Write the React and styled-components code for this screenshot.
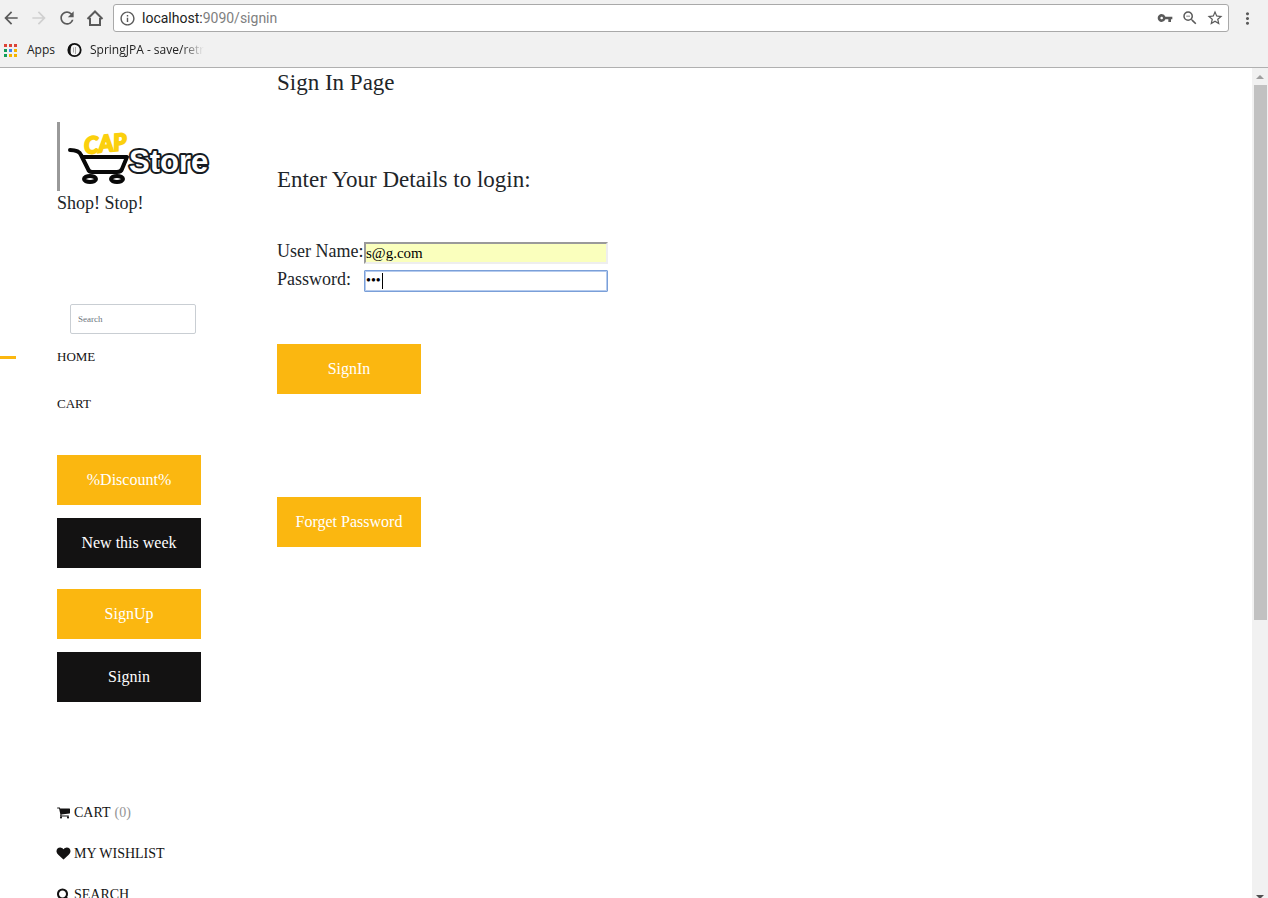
import React from "react";
import styled, { createGlobalStyle } from "styled-components";
import {
  MdArrowBack, MdArrowForward, MdRefresh, MdInfoOutline, MdVpnKey,
  MdZoomOut, MdStarBorder, MdMoreVert,
} from "react-icons/md";

const Global = createGlobalStyle`
  *, *::before, *::after { box-sizing: border-box; }
  body {
    margin: 0;
    background: #fff;
    color: #212529;
    font-family: "Liberation Serif", "Times New Roman", serif;
  }
`;

const Browser = styled.div`
  display: flex;
  flex-direction: column;
  height: 100vh;
  overflow: hidden;
`;

const Chrome = styled.header`
  flex: none;
  height: 68px;
  background: #f1f1f1;
  border-bottom: 1px solid #b0b0b0;
`;

const NavBar = styled.div`
  display: flex;
  align-items: center;
  gap: 8px;
  height: 36px;
  padding: 0 11px 0 1px;
`;

const IconButton = styled.button`
  display: flex;
  align-items: center;
  justify-content: center;
  flex: none;
  width: 20px;
  height: 20px;
  padding: 0;
  border: 0;
  background: none;
  color: ${(p) => (p.disabled ? "#d0d0d0" : "#5a5a5a")};
`;

const AddressBar = styled.div`
  display: flex;
  align-items: center;
  flex: 1;
  gap: 5px;
  height: 28px;
  padding: 0 3px;
  border: 1px solid #a9a9a9;
  border-radius: 3px;
  background: #fff;
`;

const Address = styled.div`
  flex: 1;
  color: #808080;
  font: 14px/20px Roboto, sans-serif;
  b { font-weight: 400; color: #222; }
`;

const Bookmarks = styled.nav`
  display: flex;
  align-items: center;
  height: 28px;
  padding: 0 4px;
  gap: 12px;
`;

const Bookmark = styled.a`
  display: flex;
  align-items: center;
  gap: ${(p) => p.$gap}px;
  color: #222;
  font: 12px/16px "Open Sans", sans-serif;
  text-decoration: none;
  white-space: nowrap;
`;

const FadedLabel = styled.span`
  mask-image: linear-gradient(to right, #000 80%, transparent);
`;

const Viewport = styled.div`
  display: flex;
  flex: 1;
  min-height: 0;
`;

const Page = styled.div`
  display: flex;
  flex: 1;
  min-width: 0;
  overflow: hidden;
`;

const Sidebar = styled.aside`
  flex: none;
  width: 277px;
  padding: 54px 56px 0 57px;
`;

const LogoFigure = styled.a`
  display: block;
  height: 69px;
  border-left: 3px solid #999;
`;

const Tagline = styled.p`
  margin: 0;
  font-size: 18px;
  line-height: 24px;
`;

const SearchForm = styled.form`
  margin: 89px 0 0 13px;
`;

const SearchInput = styled.input`
  display: block;
  width: 126px;
  height: 30px;
  padding: 0 7px;
  border: 1px solid #c9ced3;
  border-radius: 2px;
  font: 9px/14px "Liberation Serif", serif;
  &::placeholder { color: #6c757d; opacity: 1; }
`;

const Menu = styled.nav`
  display: flex;
  flex-direction: column;
  gap: 27px;
  margin-top: 13px;
`;

const MenuLink = styled.a`
  display: flex;
  align-items: center;
  position: relative;
  color: #131212;
  font-size: 13px;
  line-height: 20px;
  text-decoration: none;
  &::before {
    content: "";
    display: ${(p) => (p.$active ? "block" : "none")};
    position: absolute;
    left: -57px;
    width: 16px;
    height: 3px;
    background: #fbb710;
  }
`;

const ButtonStack = styled.div`
  display: flex;
  flex-direction: column;
  align-items: flex-start;
  gap: 13px;
  margin-top: ${(p) => p.$top}px;
`;

const Button = styled.button`
  display: block;
  width: 144px;
  height: 50px;
  padding: 0;
  border: 0;
  background: ${(p) => (p.$dark ? "#131212" : "#fbb710")};
  color: #fff;
  font: 16px/24px "Liberation Serif", serif;
`;

const QuickLinks = styled.nav`
  display: flex;
  flex-direction: column;
  gap: 21px;
  margin-top: 101px;
`;

const QuickLink = styled.a`
  display: flex;
  align-items: center;
  gap: 4px;
  color: #131212;
  font-size: 14px;
  line-height: 20px;
  text-decoration: none;
  white-space: nowrap;
  span { color: #959595; }
`;

const Main = styled.main`
  flex: 1;
  min-width: 0;
`;

const Title = styled.h1`
  margin: 0;
  font-size: 23px;
  line-height: 30px;
  font-weight: 400;
`;

const LoginForm = styled.form`
  margin-top: 67px;
`;

const Fields = styled.div`
  margin-top: 42px;
`;

const Field = styled.div`
  display: flex;
  align-items: center;
  height: 28px;
`;

const Label = styled.label`
  flex: none;
  width: 87px;
  font-size: 18px;
  line-height: 28px;
  white-space: nowrap;
`;

const TextInput = styled.input`
  width: 244px;
  height: 22px;
  margin-top: 4px;
  padding: 0;
  border: 2px inset #eee;
  background: #faffbd;
  color: #000;
  font: 15px/18px "Liberation Serif", serif;
`;

const PasswordBox = styled.div`
  display: flex;
  align-items: center;
  width: 244px;
  height: 22px;
  margin-top: 4px;
  border: 1px solid #7a9fd8;
  border-radius: 1px;
  outline: 1px solid #b5cbee;
  outline-offset: -2px;
`;

const PasswordInput = styled.input`
  width: 17px;
  height: 18px;
  padding: 0 0 0 1px;
  border: 0;
  outline: 0;
  background: none;
  color: #000;
  font: 14px/18px "Liberation Serif", serif;
`;

const Caret = styled.span`
  width: 1px;
  height: 16px;
  background: #000;
`;

const FormActions = styled.div`
  display: flex;
  flex-direction: column;
  align-items: flex-start;
  gap: 103px;
  margin-top: 51px;
`;

const ScrollTrack = styled.div`
  display: flex;
  flex-direction: column;
  align-items: center;
  flex: none;
  width: 16px;
  background: #f1f1f1;
`;

const ScrollArrow = styled.svg`
  flex: none;
  width: 16px;
  height: 17px;
`;

const ScrollThumb = styled.div`
  width: 13px;
  height: 64.5%;
  margin-bottom: auto;
  background: #c1c1c1;
`;

function HomeIcon() {
  return (
    <svg width="18" height="18" viewBox="0 0 18 18" fill="none" stroke="#5a5a5a" strokeWidth="2">
      <path d="M1.500 10 9 2.500l7.500 7.500M4 9v7h10V9" />
    </svg>
  );
}

function AppsIcon() {
  const colors = ["#dc4437", "#dc4437", "#dc4437", "#109d58", "#4285f4", "#f4b400", "#109d58", "#f4b400", "#f4b400"];
  return (
    <svg width="13" height="13" viewBox="0 0 13 13">
      {colors.map((c, i) => (
        <rect key={i} x={(i % 3) * 5} y={Math.floor(i / 3) * 5} width="3" height="3" fill={c} />
      ))}
    </svg>
  );
}

function SpringIcon() {
  return (
    <svg width="15" height="16" viewBox="0 0 15 16">
      <circle cx="7.5" cy="8" r="6.2" fill="#f6f6f6" stroke="#111" strokeWidth="1.8" />
      <path d="M6 1.500C0 3 -1 11 5 14C3 11 3 5 6 1.500z" fill="#111" />
      <path d="M6.500 5.500v5M8.500 5v7" stroke="#aaa" strokeWidth="1" />
    </svg>
  );
}

function Logo() {
  return (
    <svg width="152" height="69" viewBox="0 0 152 69" role="img" aria-label="CAP Store">
      <text x="25" y="32" transform="rotate(-6 25 32)" fill="#fbd00d" stroke="#fbd00d" strokeWidth="2"
        fontFamily="Lato, sans-serif" fontWeight="700" fontStyle="italic" fontSize="23">CAP</text>
      <g fill="none" stroke="#080808" strokeLinejoin="round" strokeLinecap="round">
        <path d="M10 28q9 0 11 5l7 14q1 3 4 3h25q4 0 5-3l5-12H22" strokeWidth="4" />
        <ellipse cx="30" cy="57" rx="6" ry="3" strokeWidth="4" />
        <ellipse cx="57" cy="57" rx="6" ry="3" strokeWidth="4" />
      </g>
      <text x="69" y="50" fill="#fff" stroke="#161b22" strokeWidth="4" paintOrder="stroke" strokeLinejoin="round"
        fontFamily="Liberation Sans, sans-serif" fontWeight="700" fontSize="31">Store</text>
    </svg>
  );
}

const glyphs = {
  cart: "M704 1536q0 52-38 90t-90 38-90-38-38-90 38-90 90-38 90 38 38 90zm896 0q0 52-38 90t-90 38-90-38-38-90 38-90 90-38 90 38 38 90zm128-1088v512q0 24-16.5 42.5t-40.5 21.5l-1044 122q13 60 13 70 0 16-24 64h920q26 0 45 19t19 45-19 45-45 19h-1024q-26 0-45-19t-19-45q0-11 8-31.5t16-36 21.5-40 15.5-29.5l-177-823h-204q-26 0-45-19t-19-45 19-45 45-19h256q16 0 28.5 6.5t19.5 15.5 13 24.5 8 26 5.5 29.5 4.5 26h1201q26 0 45 19t19 45z",
  heart: "M896 1664q-26 0-44-18l-624-602q-10-8-27.5-26t-55.5-65.5-68-97.5-53.5-121-23.5-138q0-220 127-344t351-124q62 0 126.5 21.5t120 58 95.5 68.5 76 68q36-36 76-68t95.5-68.5 120-58 126.5-21.5q224 0 351 124t127 344q0 221-229 450l-623 600q-18 18-44 18z",
  search: "M1216 832q0-185-131.5-316.5t-316.5-131.5-316.5 131.5-131.5 316.5 131.5 316.5 316.5 131.5 316.5-131.5 131.5-316.5zm512 832q0 52-38 90t-90 38q-54 0-90-38l-343-342q-179 124-399 124-143 0-273.5-55.5t-225-150-150-225-55.5-273.5 55.5-273.5 150-225 225-150 273.5-55.5 273.5 55.5 225 150 150 225 55.5 273.5q0 220-124 399l343 343q37 37 37 90z",
};

function Glyph({ name }) {
  return (
    <svg width="13" height="14" viewBox="64 64 1664 1792" fill="currentColor" overflow="visible">
      <path d={glyphs[name]} />
    </svg>
  );
}

export default function App() {
  return (
    <Browser>
      <Global />
      <Chrome>
        <NavBar>
          <IconButton aria-label="Back"><MdArrowBack size={20} /></IconButton>
          <IconButton aria-label="Forward" disabled><MdArrowForward size={20} /></IconButton>
          <IconButton aria-label="Reload"><MdRefresh size={20} /></IconButton>
          <IconButton aria-label="Home"><HomeIcon /></IconButton>
          <AddressBar>
            <IconButton aria-label="Site information"><MdInfoOutline size={17} /></IconButton>
            <Address><b>localhost:</b>9090/signin</Address>
            <IconButton aria-label="Saved passwords"><MdVpnKey size={16} /></IconButton>
            <IconButton aria-label="Zoom"><MdZoomOut size={18} /></IconButton>
            <IconButton aria-label="Bookmark this page"><MdStarBorder size={18} /></IconButton>
          </AddressBar>
          <IconButton aria-label="Menu"><MdMoreVert size={19} /></IconButton>
        </NavBar>
        <Bookmarks>
          <Bookmark href="#apps" $gap={10}><AppsIcon />Apps</Bookmark>
          <Bookmark href="#spring" $gap={8}><SpringIcon /><FadedLabel>SpringJPA - save/retr</FadedLabel></Bookmark>
        </Bookmarks>
      </Chrome>
      <Viewport>
        <Page>
          <Sidebar>
            <LogoFigure href="#home"><Logo /></LogoFigure>
            <Tagline>Shop! Stop!</Tagline>
            <SearchForm>
              <SearchInput type="search" placeholder="Search" aria-label="Search" />
            </SearchForm>
            <Menu>
              <MenuLink href="#home" $active>HOME</MenuLink>
              <MenuLink href="#cart">CART</MenuLink>
            </Menu>
            <ButtonStack $top={41}>
              <Button>%Discount%</Button>
              <Button $dark>New this week</Button>
            </ButtonStack>
            <ButtonStack $top={21}>
              <Button>SignUp</Button>
              <Button $dark>Signin</Button>
            </ButtonStack>
            <QuickLinks>
              <QuickLink href="#cart"><Glyph name="cart" />CART <span>(0)</span></QuickLink>
              <QuickLink href="#wishlist"><Glyph name="heart" />MY WISHLIST</QuickLink>
              <QuickLink href="#search"><Glyph name="search" />SEARCH</QuickLink>
            </QuickLinks>
          </Sidebar>
          <Main>
            <Title>Sign In Page</Title>
            <LoginForm onSubmit={(e) => e.preventDefault()}>
              <Title as="h2">Enter Your Details to login:</Title>
              <Fields>
                <Field>
                  <Label htmlFor="user">User Name:</Label>
                  <TextInput id="user" type="text" defaultValue="s@g.com" />
                </Field>
                <Field>
                  <Label htmlFor="password">Password:</Label>
                  <PasswordBox>
                    <PasswordInput id="password" type="password" defaultValue="abc" />
                    <Caret />
                  </PasswordBox>
                </Field>
              </Fields>
              <FormActions>
                <Button type="submit">SignIn</Button>
                <Button type="button">Forget Password</Button>
              </FormActions>
            </LoginForm>
          </Main>
        </Page>
        <ScrollTrack>
          <ScrollArrow viewBox="0 0 16 17"><path d="M4 11l4-4 4 4z" fill="#a0a0a0" /></ScrollArrow>
          <ScrollThumb />
          <ScrollArrow viewBox="0 0 16 17"><path d="M4 14h8l-4 4z" fill="#505050" /></ScrollArrow>
        </ScrollTrack>
      </Viewport>
    </Browser>
  );
}
